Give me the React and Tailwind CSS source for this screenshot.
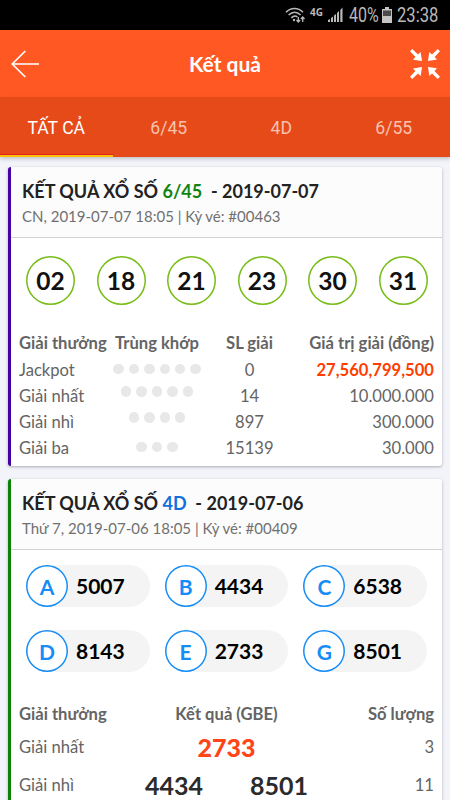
import React from "react";

const winning = ["02", "18", "21", "23", "30", "31"];

const prizes = [
  { name: "Jackpot", dots: 6, count: "0", value: "27,560,799,500", jackpot: true, shift: "pb-[2px]" },
  { name: "Giải nhất", dots: 5, count: "14", value: "10.000.000", shift: "pb-[9px]" },
  { name: "Giải nhì", dots: 4, count: "897", value: "300.000", shift: "pb-[9px]" },
  { name: "Giải ba", dots: 3, count: "15139", value: "30.000", shift: "pb-[2px]" },
];

const groups = [
  ["A", "5007"],
  ["B", "4434"],
  ["C", "6538"],
  ["D", "8143"],
  ["E", "2733"],
  ["G", "8501"],
];

function StatusBar() {
  return (
    <div className="flex h-[30px] items-center bg-black pl-[285px] font-['Roboto',sans-serif] text-[#b9b9b9]">
      <svg width="20" height="18" viewBox="0 0 20 18" fill="none" stroke="currentColor" strokeWidth="1.6">
        <path d="M1 6.2C6 1.3 13 1.3 18 6.2" />
        <path d="M3.6 9C7.4 5.6 12 5.6 15.6 9" />
        <path d="M6.3 11.8C8.6 9.7 10.8 9.7 12.4 11" />
        <circle cx="9" cy="14" r="1.2" fill="currentColor" stroke="none" />
        <path d="M13.3 11v5M11.5 14l1.8 2 1.8-2M17.7 16v-5M15.9 13l1.8-2 1.8 2" strokeWidth="1.3" />
      </svg>
      <span className="ml-[5px] -mt-[6px] w-[13px] font-['Open_Sans',sans-serif] text-[10px] leading-3 font-bold">4G</span>
      <svg className="ml-[5px]" width="15" height="16" viewBox="0 0 15 16" fill="currentColor">
        <path d="M0 15v-2l2-1v3zM3 15v-4l2-1.5V15zM6 15V8.5L8 7v8zM9 15V6l2-2v11zM12.3 15V3l2.2-2.4V15z" />
      </svg>
      <span className="ml-[6px] w-[30px] whitespace-nowrap">
        <span className="inline-block origin-left scale-x-[0.8] text-[20px] leading-[30px]">40%</span>
      </span>
      <svg className="ml-[3px]" width="10" height="16" viewBox="0 0 10 16">
        <path d="M3 0h4v2h3v14H0V2h3z" fill="#c4c4c4" />
        <path d="M1 3.5h8V9H1z" fill="#4b4b4b" />
      </svg>
      <span className="ml-[5px] w-[42px] whitespace-nowrap">
        <span className="inline-block origin-left scale-x-[0.83] text-[20px] leading-[30px]">23:38</span>
      </span>
    </div>
  );
}

function Header() {
  return (
    <header className="flex h-[67px] items-center justify-between bg-[#ff5822] pr-[10px] pl-[11px] text-white">
      <svg width="29" height="28" viewBox="0 0 29 28" fill="none" stroke="currentColor" strokeWidth="1.7">
        <path d="M14.3 1 1.2 14l13.1 13M1 14h27" />
      </svg>
      <h1 className="pt-px text-[21px] leading-7 font-bold">Kết quả</h1>
      <svg width="30" height="30" viewBox="0 0 30 30" fill="currentColor">
        {[0, 90, 180, 270].map((angle) => (
          <path key={angle} transform={`rotate(${angle} 15 15)`} d="M0 2.2 2.3 0 8 5.4 10.6 3 12 12 3 10.7 5.5 8z" />
        ))}
      </svg>
    </header>
  );
}

function Tabs() {
  return (
    <nav className="grid h-[60px] grid-cols-4 bg-[#e64a19] text-center font-['Roboto',sans-serif] text-[17.6px] leading-[62px] text-[#f7c3b0] shadow-[0_2px_4px_rgba(0,0,0,0.2)]">
      <div className="flex h-[60px] flex-col text-white">
        <span className="h-[57px]">TẤT CẢ</span>
        <span className="h-[3px] border-t border-[#e51c23] bg-[#ffc107]" />
      </div>
      <span>6/45</span>
      <span>4D</span>
      <span>6/55</span>
    </nav>
  );
}

function CardHeader({ game, gameColor, date, detail }) {
  return (
    <div className="h-[71px] rounded-tr-[3px] border-b border-[#d2d2d2] bg-[#fcfcfc] pt-[11px] pl-[11px] whitespace-pre">
      <h2 className="text-[18px] leading-[26px] font-bold text-[#222]">
        KẾT QUẢ XỔ SỐ <span className={gameColor}>{game}</span>{"  - "}{date}
      </h2>
      <p className="text-[15px] leading-[25px] text-[#707070]">{detail}</p>
    </div>
  );
}

function Dots({ count }) {
  return (
    <span className="flex justify-center gap-[5px]">
      {Array.from({ length: count }, (_, i) => (
        <i key={i} className="size-[10.4px] rounded-full bg-[#e8e8e8]" />
      ))}
    </span>
  );
}

function LottoCard() {
  return (
    <section className="h-[299px] rounded-[3px] border-l-[3px] border-[#4500a7] bg-white shadow-[0_1px_3px_rgba(0,0,0,0.3)]">
      <CardHeader game="6/45" gameColor="text-[#118511]" date="2019-07-07" detail="CN, 2019-07-07 18:05 | Kỳ vé: #00463" />
      <div className="flex justify-between pt-[18px] pr-[14.5px] pl-[15px]">
        {winning.map((n) => (
          <span key={n} className="size-[49px] rounded-full text-center text-[24.5px] leading-[50px] font-bold text-[#111] shadow-[inset_0_0_0_1.5px_#77bd18]">
            {n}
          </span>
        ))}
      </div>
      <div className="pt-[25px] pr-[8px] pl-[8px] text-[16.6px] text-[#646464]">
        <div className="grid h-[26px] grid-cols-[88px_100px_85px_1fr] items-center text-center font-bold whitespace-nowrap">
          <span className="text-left">Giải thưởng</span>
          <span>Trùng khớp</span>
          <span>SL giải</span>
          <span className="text-right">Giá trị giải (đồng)</span>
        </div>
        <div className="pt-px">
          {prizes.map((p) => (
            <div key={p.name} className="grid h-[26px] grid-cols-[88px_100px_85px_1fr] items-center text-center">
              <span className="text-left">{p.name}</span>
              <span className={p.shift}><Dots count={p.dots} /></span>
              <span>{p.count}</span>
              <span className={p.jackpot ? "text-right font-bold text-[#ff3d00]" : "text-right"}>{p.value}</span>
            </div>
          ))}
        </div>
      </div>
    </section>
  );
}

function FourDigitCard() {
  return (
    <section className="h-[340px] rounded-[3px] border-l-[3px] border-[#088308] bg-white shadow-[0_1px_3px_rgba(0,0,0,0.3)]">
      <CardHeader game="4D" gameColor="text-[#136fdc]" date="2019-07-06" detail="Thứ 7, 2019-07-06 18:05 | Kỳ vé: #00409" />
      <div className="grid grid-cols-3 gap-x-[15px] gap-y-[23px] pt-[15px] pr-[15px] pl-[15px]">
        {groups.map(([letter, number]) => (
          <div key={letter} className="flex h-[42px] items-center rounded-full bg-[#f4f4f4]">
            <span className="size-[42px] rounded-full bg-white text-center text-[21px] leading-[43px] font-bold text-[#168cf5] shadow-[inset_0_0_0_1.5px_#168cf5]">
              {letter}
            </span>
            <span className="ml-[8px] text-[21px] font-bold text-black">{number}</span>
          </div>
        ))}
      </div>
      <div className="pt-[28px] pr-[8px] pl-[8px] text-[16.6px] whitespace-nowrap text-[#646464]">
        <div className="grid h-[28px] grid-cols-[88px_1fr_88px] items-center text-center font-bold">
          <span className="text-left">Giải thưởng</span>
          <span>Kết quả (GBE)</span>
          <span className="text-right">Số lượng</span>
        </div>
        <div className="grid h-[38px] grid-cols-[88px_1fr_88px] items-center text-center">
          <span className="text-left">Giải nhất</span>
          <span className="text-[25px] leading-[38px] font-black text-[#ff4517]">2733</span>
          <span className="text-right">3</span>
        </div>
        <div className="grid h-[38px] grid-cols-[88px_1fr_88px] items-center text-center">
          <span className="text-left">Giải nhì</span>
          <span className="flex justify-center gap-[47px] text-[25px] leading-[38px] font-bold text-[#2b2b2b]">
            <span>4434</span>
            <span>8501</span>
          </span>
          <span className="text-right">11</span>
        </div>
      </div>
    </section>
  );
}

export default function App() {
  return (
    <div className="h-[800px] w-[450px] overflow-hidden bg-[#f2f4fa] font-['Lato',sans-serif]">
      <StatusBar />
      <Header />
      <Tabs />
      <main className="flex flex-col gap-[13px] pt-[10px] pr-[8px] pl-[8px]">
        <LottoCard />
        <FourDigitCard />
      </main>
    </div>
  );
}
